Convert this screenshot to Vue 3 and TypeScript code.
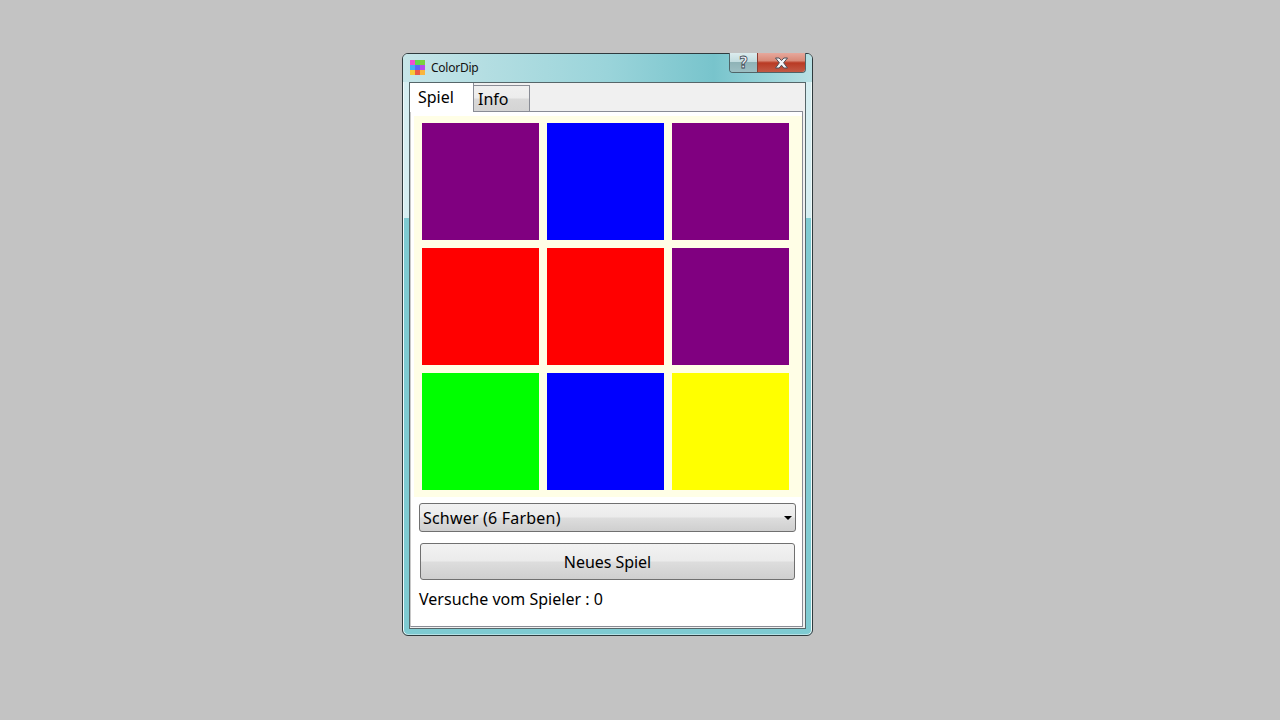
<script setup lang="ts">
const tiles: string[] = ['#800080','#0000ff','#800080','#ff0000','#ff0000','#800080','#00ff00','#0000ff','#ffff00']
const icon: string[] = ['#ee4fd2','#5fd64c','#7bd23f','#45aaf5','#5c66f5','#b84aec','#f7ca3a','#ea5a48','#f9b53e']
</script>

<template>
  <div class="stage">
    <div class="window">
      <div class="titlebar">
        <div class="app-icon">
          <span v-for="(c, i) in icon" :key="i" :style="{ background: c }"></span>
        </div>
        <span class="title">ColorDip</span>
        <div class="caption">
          <div class="cap help">?</div>
          <div class="cap close">
            <svg width="15" height="12" viewBox="0 0 15 12">
              <path d="M1.5 1h3.6l2.4 2.6L9.9 1h3.6L9.6 5.8l3.9 5.2H9.8L7.5 8.2 5.2 11H1.5l3.9-5.2z" fill="#f4f4f6" stroke="#4b4f58" stroke-width="1"/>
            </svg>
          </div>
        </div>
      </div>
      <div class="frame">
        <div class="tabs">
          <div class="tab active">Spiel</div>
          <div class="tab">Info</div>
        </div>
        <div class="panel">
          <div class="board">
            <div v-for="(c, i) in tiles" :key="i" class="tile" :style="{ background: c }"></div>
          </div>
          <div class="select">
            <span class="select-text">Schwer (6 Farben)</span>
            <i class="arrow"></i>
          </div>
          <button class="btn">Neues Spiel</button>
          <div class="label">Versuche vom Spieler : 0</div>
        </div>
      </div>
    </div>
  </div>
</template>

<style>
html, body { margin: 0; background: #c3c3c3; }
</style>

<style scoped>
.stage {
  width: 1280px;
  height: 720px;
  box-sizing: border-box;
  padding: 53px 0 0 402px;
  background: #c3c3c3;
  font-family: "Noto Sans", "Open Sans", sans-serif;
  color: #000;
  overflow: hidden;
}
.window {
  width: 411px;
  height: 583px;
  box-sizing: border-box;
  border: 1px solid #2f3a3d;
  border-radius: 6px;
  padding: 0 6px 6px;
  background: linear-gradient(to bottom, #d6eef1 0, #d6eef1 164px, #7fcbd2 164px, #7fcbd2 100%);
  box-shadow: inset 1px 0 0 #f0fafa, inset -1px 0 0 #f0fafa, inset 0 -1px 0 #b5e2e6;
}
.titlebar {
  height: 28px;
  margin: 0 -6px;
  padding: 0 6px;
  display: flex;
  align-items: flex-start;
  border-radius: 5px 5px 0 0;
  background: linear-gradient(to right, #c6e5e8 0, #b4dee2 20%, #9ad4da 50%, #78c4cc 76%, #9ad5da 90%, #b9e0e4 100%);
}
.app-icon {
  margin: 6px 0 0 1px;
  width: 15px;
  height: 15px;
  display: grid;
  grid-template-columns: repeat(3, 5px);
  grid-template-rows: repeat(3, 5px);
}
.title {
  margin: 6px 0 0 6px;
  font-size: 12px;
  line-height: 16px;
  letter-spacing: -0.25px;
  color: #111;
}
.caption {
  margin: -1px 0 0 auto;
  display: flex;
  height: 20px;
  box-sizing: border-box;
  border: 1px solid #4f6468;
  border-top: 0;
  border-radius: 0 0 4px 4px;
  overflow: hidden;
}
.cap {
  display: flex;
  align-items: center;
  justify-content: center;
}
.help {
  width: 27px;
  font-family: "DejaVu Sans", sans-serif;
  font-size: 15px;
  font-weight: 700;
  color: #eef1f5;
  -webkit-text-stroke: 0.8px #3f4a55;
  background: linear-gradient(to bottom, #dcecee 0, #c2dcdf 45%, #8fb3b7 50%, #9dbfc3 100%);
  border-right: 1px solid #8a3a30;
}
.close {
  width: 47px;
  background: linear-gradient(to bottom, #e6a89c 0, #d98a78 40%, #b93a24 52%, #c25a45 100%);
}
.frame {
  height: 547px;
  box-sizing: border-box;
  border: 1px solid #566669;
  background: #f0f0f0;
  padding: 0 2px 1px 0;
  display: flex;
  flex-direction: column;
}
.tabs {
  height: 28px;
  display: flex;
  align-items: flex-end;
  position: relative;
  z-index: 1;
}
.tab {
  box-sizing: border-box;
  font-size: 16px;
  line-height: 22px;
}
.tab:not(.active) {
  width: 57px;
  height: 26px;
  padding: 2px 0 0 4px;
  border: 1px solid #898c95;
  border-bottom: 0;
  margin-left: -1px;
  background: linear-gradient(to bottom, #f0f0f0 0, #ececec 48%, #d9d9d9 52%, #d4d4d4 100%);
}
.tab.active {
  width: 64px;
  height: 29px;
  padding: 3px 0 0 8px;
  background: #fff;
  border-right: 1px solid #898c95;
  margin-bottom: -1px;
}
.panel {
  flex: 1;
  box-sizing: border-box;
  background: #fff;
  border: 1px solid #898c95;
  border-left-color: #c8c8c8;
  padding: 4px 0 0 3px;
  display: flex;
  flex-direction: column;
}
.board {
  box-sizing: border-box;
  height: 381px;
  padding: 7px 0 0 8px;
  background: #fffee6;
  display: grid;
  grid-template-columns: repeat(3, 117px);
  grid-template-rows: repeat(3, 117px);
  gap: 8px;
}
.select {
  margin: 6px 0 0 5px;
  width: 377px;
  height: 29px;
  box-sizing: border-box;
  border: 1px solid #707070;
  border-radius: 3px;
  padding: 0 3px;
  font-size: 16px;
  display: flex;
  align-items: center;
  justify-content: space-between;
  background: linear-gradient(to bottom, #f2f2f2 0, #ebebeb 48%, #dddddd 52%, #cfcfcf 100%);
}
.select-text {
  letter-spacing: 0.2px;
}
.arrow {
  width: 0;
  height: 0;
  border: 4px solid transparent;
  border-top: 4px solid #000;
  border-bottom: 0;
}
.btn {
  margin: 11px 0 0 6px;
  width: 375px;
  height: 37px;
  box-sizing: border-box;
  border: 1px solid #707070;
  border-radius: 3px;
  font: inherit;
  font-size: 16px;
  letter-spacing: -0.05px;
  color: #000;
  padding: 0;
  background: linear-gradient(to bottom, #f2f2f2 0, #ebebeb 48%, #dddddd 52%, #cfcfcf 100%);
}
.label {
  margin: 8px 0 0 5px;
  font-size: 16px;
  line-height: 22px;
  letter-spacing: 0.02px;
}
</style>
